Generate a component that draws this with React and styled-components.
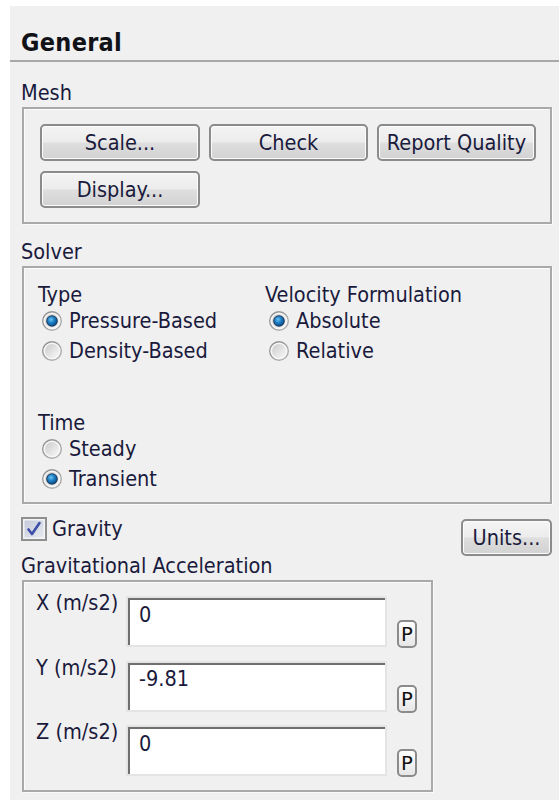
import React from "react";
import styled, { createGlobalStyle } from "styled-components";

const GlobalStyle = createGlobalStyle`
  html, body {
    margin: 0;
    padding: 0;
    background: #ffffff;
  }
  body {
    font-family: "DejaVu Sans Condensed", "Liberation Sans", sans-serif;
  }
`;

const Page = styled.div`
  padding: 6px 0 0 10px;
`;

const Panel = styled.div`
  background: #f0f0f0;
  min-height: 794px;
  color: #1a1a3c;
  font-size: 21.5px;
`;

const Header = styled.div`
  padding: 22px 0 2px 11px;
  font-size: 25px;
  line-height: 30px;
  font-weight: bold;
  letter-spacing: 0.3px;
  color: #111118;
  border-bottom: 2px solid #a8a8a8;
`;

const Body = styled.div`
  padding: 0 7px 0 11px;
`;

const SectionLabel = styled.div`
  line-height: 24px;
  margin-top: ${(p) => p.$top}px;
`;

const GroupBox = styled.div`
  margin: 2px 0 0 1px;
  border: 2px solid #a9a9a9;
  box-shadow: inset 1px 1px 0 #fbfbfb, 1px 1px 0 #fbfbfb;
  width: ${(p) => (p.$width ? `${p.$width}px` : "auto")};
  box-sizing: border-box;
`;

const MeshBox = styled(GroupBox)`
  padding: 15px 0 14px 16px;
`;

const ButtonGrid = styled.div`
  display: grid;
  grid-template-columns: 160px 159px 159px;
  column-gap: 9px;
  row-gap: 10px;
`;

const PushButton = styled.button`
  height: 37px;
  width: ${(p) => (p.$width ? `${p.$width}px` : "auto")};
  margin-top: ${(p) => p.$top || 0}px;
  padding: 0;
  border: 2px solid #8b8b8b;
  border-radius: 5px;
  background: linear-gradient(
    #f4f4f4 0%,
    #ececec 48%,
    #dedede 52%,
    #d2d2d2 100%
  );
  box-shadow: inset 0 0 0 1px #fbfbfb;
  font-family: inherit;
  font-size: 21.5px;
  color: #1a1a3c;
  line-height: 33px;
  text-align: center;
  white-space: nowrap;
`;

const SolverBox = styled(GroupBox)`
  padding: 15px 0 8px 14px;
`;

const SolverGrid = styled.div`
  display: grid;
  grid-template-columns: 227px 1fr;
`;

const OptionGroup = styled.div`
  display: flex;
  flex-direction: column;
  margin-top: ${(p) => p.$top || 0}px;
`;

const GroupTitle = styled.div`
  line-height: 23px;
`;

const RadioRow = styled.label`
  display: flex;
  align-items: center;
  gap: 6px;
  height: 30px;
  line-height: 24px;
`;

const RadioMark = styled.svg`
  width: 22px;
  height: 22px;
  margin-left: 3px;
  flex: none;
`;

const Radio = ({ checked, id }) => (
  <RadioMark viewBox="0 0 22 22">
    <defs>
      <linearGradient id={`ring-${id}`} x1="0" y1="0" x2="1" y2="1">
        <stop offset="0" stopColor="#8a8a8a" />
        <stop offset="1" stopColor="#b8b8b8" />
      </linearGradient>
      <linearGradient id={`well-${id}`} x1="0" y1="0" x2="1" y2="1">
        <stop offset="0" stopColor="#cbcbcb" />
        <stop offset="1" stopColor="#f8f8f8" />
      </linearGradient>
      <radialGradient id={`dot-${id}`} cx="0.4" cy="0.35" r="0.7">
        <stop offset="0" stopColor="#6cc4f4" />
        <stop offset="0.5" stopColor="#1c7fc4" />
        <stop offset="1" stopColor="#0b4a86" />
      </radialGradient>
    </defs>
    <circle cx="11" cy="11" r="10" fill={`url(#ring-${id})`} />
    <circle cx="11" cy="11" r="8.6" fill="#f7f7f7" />
    <circle cx="11" cy="11" r="7" fill={`url(#well-${id})`} />
    {checked && (
      <>
        <circle cx="11" cy="11" r="5.8" fill="#1e3b5c" />
        <circle cx="11" cy="11" r="4.8" fill={`url(#dot-${id})`} />
      </>
    )}
  </RadioMark>
);

const GravityRow = styled.div`
  display: flex;
  justify-content: space-between;
  align-items: flex-start;
  margin-top: 13px;
`;

const CheckLabel = styled.label`
  display: flex;
  align-items: center;
  gap: 5px;
  line-height: 24px;
`;

const CheckMark = styled.svg`
  width: 26px;
  height: 24px;
  flex: none;
`;

const Checkbox = () => (
  <CheckMark viewBox="0 0 26 24">
    <defs>
      <linearGradient id="chk-fill" x1="0" y1="0" x2="1" y2="1">
        <stop offset="0" stopColor="#c3cad8" />
        <stop offset="1" stopColor="#e6e9f0" />
      </linearGradient>
    </defs>
    <rect x="1" y="1" width="24" height="22" fill="#f4f4f4" stroke="#8f8f8f" strokeWidth="2" />
    <rect x="3.5" y="3.5" width="19" height="17" fill="url(#chk-fill)" />
    <path
      d="M7.5 12.5 L11 17 L18.5 6"
      fill="none"
      stroke="#3d4fa8"
      strokeWidth="2.6"
      strokeLinecap="round"
      strokeLinejoin="round"
    />
  </CheckMark>
);

const AccelBox = styled(GroupBox)`
  padding: 14px 14px 14px 12px;
  display: flex;
  flex-direction: column;
  gap: 13.5px;
`;

const AxisRow = styled.div`
  display: flex;
  align-items: flex-start;
  height: 51px;
`;

const AxisLabel = styled.span`
  width: 90px;
  line-height: 24px;
  margin-top: -5px;
  flex: none;
  white-space: nowrap;
`;

const ValueField = styled.input`
  box-sizing: border-box;
  width: 261px;
  height: 51px;
  margin: 0;
  border: 2px solid #e4e4e4;
  box-shadow: inset 2px 2px 0 #6f6f6f;
  background: #ffffff;
  padding: 4px 8px 19px 11px;
  font-family: inherit;
  font-size: 21.5px;
  line-height: 24px;
  color: #1a1a3c;
  outline: none;
`;

const ParamButton = styled.span`
  box-sizing: border-box;
  width: 20px;
  height: 28px;
  margin: 0 0 -1px 10px;
  align-self: flex-end;
  border: 2px solid #8b8b8b;
  border-radius: 5px;
  background: linear-gradient(#ffffff, #e6e6e6);
  display: flex;
  align-items: center;
  justify-content: center;
  font-family: "DejaVu Sans Mono", monospace;
  font-size: 20px;
  line-height: 1;
  color: #111111;
`;

const axes = [
  { name: "X (m/s2)", value: "0" },
  { name: "Y (m/s2)", value: "-9.81" },
  { name: "Z (m/s2)", value: "0" },
];

export default function App() {
  return (
    <>
      <GlobalStyle />
      <Page>
        <Panel>
          <Header>General</Header>
          <Body>
            <SectionLabel $top={19}>Mesh</SectionLabel>
            <MeshBox>
              <ButtonGrid>
                <PushButton>Scale...</PushButton>
                <PushButton>Check</PushButton>
                <PushButton>Report Quality</PushButton>
                <PushButton>Display...</PushButton>
              </ButtonGrid>
            </MeshBox>

            <SectionLabel $top={16}>Solver</SectionLabel>
            <SolverBox>
              <SolverGrid>
                <OptionGroup>
                  <GroupTitle>Type</GroupTitle>
                  <RadioRow>
                    <Radio checked id="pb" />
                    Pressure-Based
                  </RadioRow>
                  <RadioRow>
                    <Radio id="db" />
                    Density-Based
                  </RadioRow>
                </OptionGroup>
                <OptionGroup>
                  <GroupTitle>Velocity Formulation</GroupTitle>
                  <RadioRow>
                    <Radio checked id="abs" />
                    Absolute
                  </RadioRow>
                  <RadioRow>
                    <Radio id="rel" />
                    Relative
                  </RadioRow>
                </OptionGroup>
              </SolverGrid>
              <OptionGroup $top={45}>
                <GroupTitle>Time</GroupTitle>
                <RadioRow>
                  <Radio id="st" />
                  Steady
                </RadioRow>
                <RadioRow>
                  <Radio checked id="tr" />
                  Transient
                </RadioRow>
              </OptionGroup>
            </SolverBox>

            <GravityRow>
              <CheckLabel>
                <Checkbox />
                Gravity
              </CheckLabel>
              <PushButton $width={91} $top={2}>
                Units...
              </PushButton>
            </GravityRow>

            <SectionLabel $top={-2}>Gravitational Acceleration</SectionLabel>
            <AccelBox $width={411}>
              {axes.map((a) => (
                <AxisRow key={a.name}>
                  <AxisLabel>{a.name}</AxisLabel>
                  <ValueField readOnly value={a.value} />
                  <ParamButton>P</ParamButton>
                </AxisRow>
              ))}
            </AccelBox>
          </Body>
        </Panel>
      </Page>
    </>
  );
}
